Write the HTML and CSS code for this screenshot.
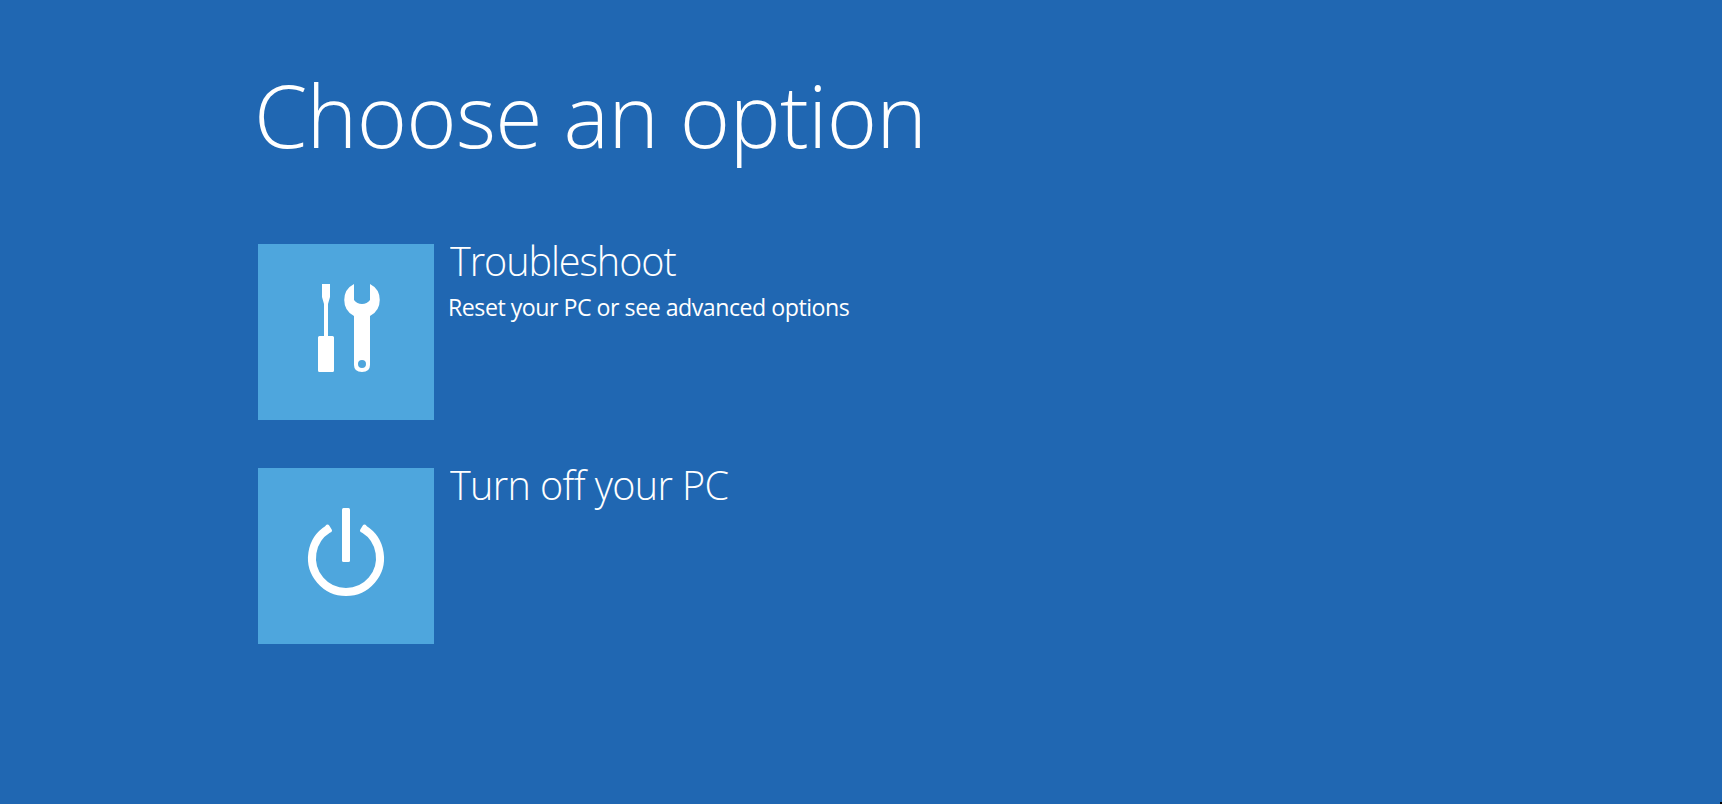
FILE: index.html
```html
<!DOCTYPE html>
<html lang="en">
<head>
  <meta charset="UTF-8">
  <meta name="viewport" content="width=device-width, initial-scale=1.0">
  <title>Choose an option</title>
  <link rel="stylesheet" href="styles.css">
</head>
<body>

<main class="container">
  <h1 class="title">Choose an option</h1>

  <div class="option">
    <div class="tile">
      <!-- Screwdriver and wrench -->
      <svg width="176" height="176" viewBox="0 0 176 176" fill="#fff">
        <path d="M64 40h8v13l-2 7v32h4.500q1.500 0 1.500 1.500v33q0 1.500-1.500 1.500h-13q-1.500 0-1.500-1.500v-33q0-1.500 1.500-1.500h4.500v-32l-2-7z"/>
        <path fill-rule="evenodd" d="M96 40v16q3 4 8 4t8-4v-16a18 18 0 0 1 0 32v49q0 7-8 7t-8-7v-49a18 18 0 0 1 0-32zM104 116a4 4 0 1 0 0 8a4 4 0 1 0 0-8z"/>
      </svg>
    </div>
    <div class="option-text">
      <h2 class="option-name">Troubleshoot</h2>
      <p class="option-info">Reset your PC or see advanced options</p>
    </div>
  </div>

  <div class="option">
    <div class="tile">
      <!-- Power symbol -->
      <svg width="176" height="176" viewBox="0 0 176 176">
        <rect x="84" y="40" width="8" height="54" rx="1.500" fill="#fff"/>
        <path d="M70 61.200A34 34 0 1 0 106 61.200" fill="none" stroke="#fff" stroke-width="8"/>
        <path d="M69.500 58.500L72 62.500M106.500 58.500L104 62.500" stroke="#fff" stroke-width="4" stroke-linecap="round"/>
      </svg>
    </div>
    <div class="option-text">
      <h2 class="option-name turn-off">Turn off your PC</h2>
    </div>
  </div>
</main>

<div class="corner"></div>

</body>
</html>
```
FILE: styles.css
```css
body {
  margin: 0;
  height: 804px;
  overflow: hidden;
  background-color: #2067b2;
  color: white;
  font-family: "Open Sans", "Noto Sans", sans-serif;
  position: relative;
}
.container {
  padding: 65px 0 0 258px;
}
.title {
  margin: 0 0 79px -4px;
  font-size: 86px;
  line-height: 100px;
  font-weight: 300;
  letter-spacing: -0.75px;
  white-space: nowrap;
}
.option {
  display: flex;
  gap: 16px;
  margin-bottom: 48px;
}
.tile {
  width: 176px;
  height: 176px;
  background-color: #4ea6dd;
}
.tile svg {
  display: block;
}
.option-name,
.option-info {
  transform: scaleX(0.965);
  transform-origin: left;
  white-space: nowrap;
}
.option-name {
  margin: 0;
  font-size: 41px;
  line-height: 32px;
  font-weight: 300;
  letter-spacing: -1.1px;
}
.turn-off {
  letter-spacing: -0.65px;
}
.option-info {
  margin: 15px 0 0 -2px;
  font-size: 24px;
  line-height: 32px;
  letter-spacing: -0.5px;
}
/* Small black notch in the bottom right corner */
.corner {
  position: absolute;
  right: 0;
  bottom: 0;
  width: 2px;
  height: 2px;
  background-color: #000;
}
```
